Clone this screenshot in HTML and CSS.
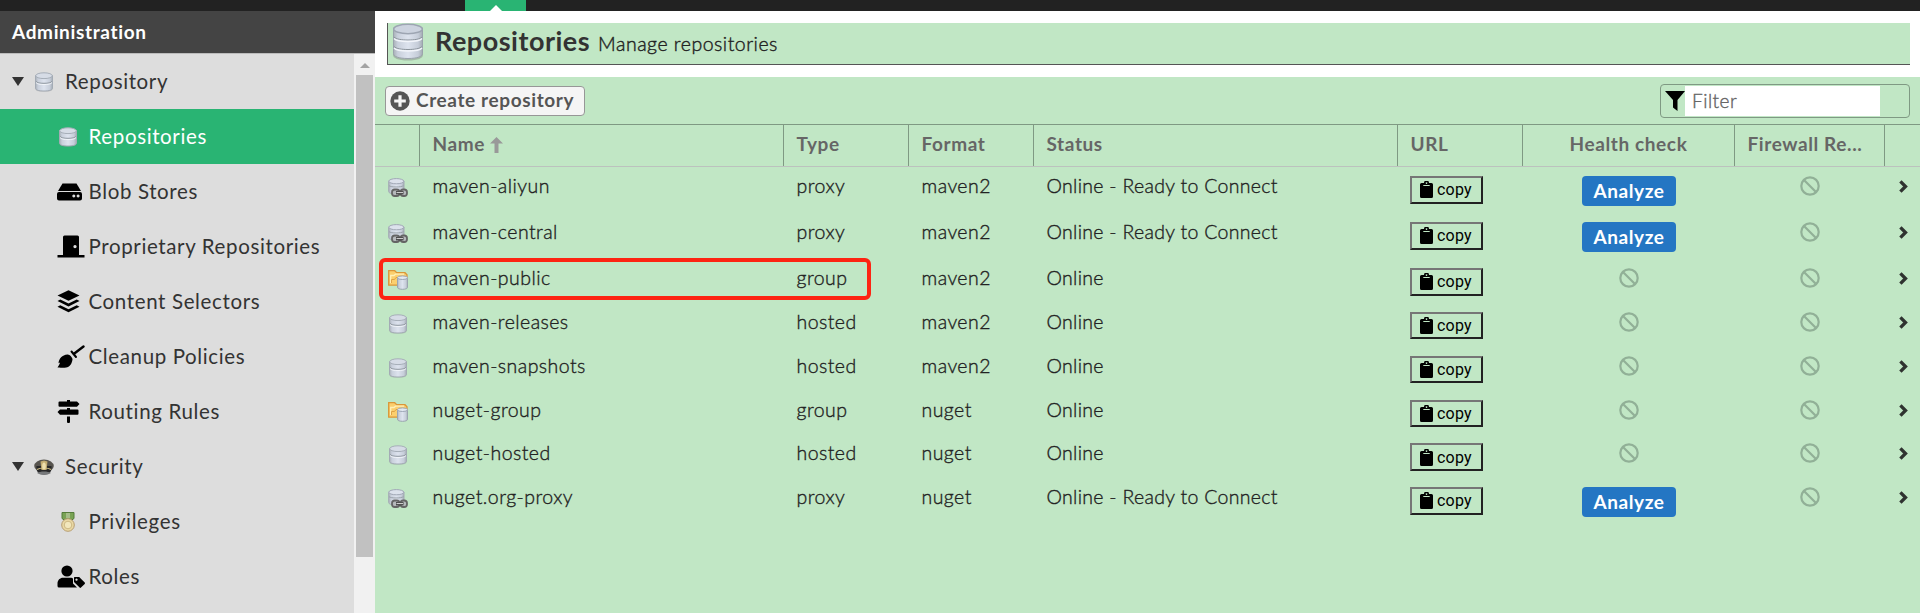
FILE: index.html
```
<!DOCTYPE html>
<html lang="en">
<head>
<meta charset="utf-8">
<title>Repositories</title>
<link rel="stylesheet" href="styles.css">
</head>
<body>
<svg class="defs" width="0" height="0">
  <defs>
    <linearGradient id="steel" x1="0" x2="1" y1="0" y2="0">
      <stop offset="0" stop-color="#a9b0b8"/><stop offset=".15" stop-color="#c9d0dc"/><stop offset=".5" stop-color="#dde3ee"/><stop offset=".85" stop-color="#c6cdd9"/><stop offset="1" stop-color="#a3abb3"/>
    </linearGradient>
    <symbol id="db" viewBox="0 0 20 20">
      <path d="M1.500 4v13c0 1.600 2 2.600 8.500 2.600s8.500-1 8.500-2.600V4z" fill="#777" opacity=".3"/>
      <path d="M1.500 3.500v12.700c0 1.700 3 2.800 8.500 2.800s8.500-1.100 8.500-2.800V3.500z" fill="url(#steel)" stroke="#a3abb5"/>
      <ellipse cx="10" cy="3.700" rx="8.300" ry="2.900" fill="#d6dce6" stroke="#a6aeb8"/>
      <path d="M2 9.300c1 1.600 4 2 8 2s7-.4 8-2" fill="none" stroke="#8f979f"/>
      <path d="M2 10.500c1 1.600 4 2 8 2s7-.4 8-2" fill="none" stroke="#f1f4f9"/>
    </symbol>
    <symbol id="proxy" viewBox="0 0 20 20">
      <path d="M.7 3v10.500C.7 15.200 3.500 16 8.300 16s7.700-1 7.700-2.500V3z" fill="url(#steel)" stroke="#a3abb5"/>
      <ellipse cx="8.300" cy="3.200" rx="7.500" ry="2.600" fill="#dce2ec" stroke="#a0a7b5"/>
      <path d="M1 7.700c2 1.700 12 1.700 14.500 0" fill="none" stroke="#9aa2aa"/>
      <rect x="4" y="11.500" width="7.500" height="6.500" rx="2.800" fill="#b5b8bb" stroke="#646464" stroke-width="1.800"/>
      <rect x="12.500" y="11.500" width="6.500" height="6.500" rx="2.800" fill="#b5b8bb" stroke="#646464" stroke-width="1.800"/>
      <path d="M8 14.700h7.500" stroke="#444" stroke-width="3.400"/><path d="M8.500 14.500h6.500" stroke="#ccc" stroke-width="1.200"/>
    </symbol>
    <symbol id="group" viewBox="0 0 20 20">
      <path d="M.7.7h6l2 2H17l2 2v10.500H.7z" fill="#fbcf6e" stroke="#da9638" stroke-width="1.300"/>
      <path d="M2.700 13V5.500H6l1.500-1.300H16" fill="none" stroke="#fff0b8" stroke-width="1.300"/>
      <path d="M3.500 13V9.500h3l1.500-2h3" fill="none" stroke="#dfa245"/>
      <path d="M9.500 8v9.300c0 1.200 1.800 2 5 2s5-.8 5-2V8z" fill="url(#steel)" stroke="#9ba4b0"/>
      <ellipse cx="14.500" cy="7.700" rx="5" ry="1.800" fill="#e2e8f1" stroke="#9ca5b5"/>
    </symbol>
    <symbol id="ban" viewBox="0 0 20 20"><circle cx="10" cy="10" r="8.700" fill="none" stroke="#91b097" stroke-width="2.200"/><path d="M4 4l12 12" stroke="#91b097" stroke-width="2.200"/></symbol>
    <symbol id="go" viewBox="0 0 9 13"><path d="M1.400 1.400 6.500 6.500l-5.100 5.100" fill="none" stroke="#2f3330" stroke-width="3.300"/></symbol>
    <symbol id="clip" viewBox="0 0 13 17"><path fill-rule="evenodd" d="M1.500 2H4a2.500 2.500 0 0 1 5 0h2.500A1.500 1.500 0 0 1 13 3.500v12a1.500 1.500 0 0 1-1.500 1.500h-10A1.500 1.500 0 0 1 0 15.500v-12A1.500 1.500 0 0 1 1.500 2zm5-.8a.8.8 0 1 0 .01 0zM3.300 4v1.100h6.400V4z"/></symbol>
  </defs>
</svg>
<header class="topbar"><div class="tab"></div></header>
<div class="app">
  <aside class="side">
    <h2 class="side-title">Administration</h2>
    <div class="side-body">
      <nav class="tree">
        <div class="node parent"><i class="caret"></i><svg class="ico20"><use href="#db"/></svg><span>Repository</span></div>
        <div class="node child selected"><span class="slot pic"><svg class="ico20"><use href="#db"/></svg></span><span>Repositories</span></div>
        <div class="node child"><span class="slot"><svg width="25" height="18" viewBox="0 0 25 18"><path d="M5.500.5h14L24 8H1z"/><path fill-rule="evenodd" d="M2 9h21a2 2 0 0 1 2 2v4.500a2 2 0 0 1-2 2H2a2 2 0 0 1-2-2V11a2 2 0 0 1 2-2zm14.800 2.600a1.500 1.500 0 1 0 .01 0zm4.300 0a1.500 1.500 0 1 0 .01 0z"/></svg></span><span>Blob Stores</span></div>
        <div class="node child"><span class="slot"><svg width="28" height="23" viewBox="0 0 28 23"><path fill-rule="evenodd" d="M7.500.5h13A1.500 1.500 0 0 1 22 2v18h5.500v2.500H.5V20H6V2A1.500 1.500 0 0 1 7.500.5zM18 10a1.600 1.600 0 1 0 .01 0z"/></svg></span><span>Proprietary Repositories</span></div>
        <div class="node child"><span class="slot"><svg width="23" height="23" viewBox="0 0 23 23"><path d="M11.500.3 22.500 5.500 11.500 10.800.5 5.500zM3.300 9.500l8.200 3.900 8.200-3.900 2.800 1.500-11 5.400L.5 11zM3.300 15.300l8.200 3.900 8.200-3.900 2.800 1.500-11 5.400L.5 16.800z"/></svg></span><span>Content Selectors</span></div>
        <div class="node child"><span class="slot"><svg width="28" height="23" viewBox="0 0 28 23"><path d="M26.500 1.500 17 8.800" stroke="#000" stroke-width="2.400" stroke-linecap="round"/><path d="M14.500 6.500l4.500 5.500" stroke="#000" stroke-width="2" stroke-linecap="round"/><path d="M10.500 9.500c1.500-.6 5.300 3 5 5-.6 4.500-3 7.500-6.300 8-3 .4-8.700 0-8.700 0 1-1.500 2.300-3.600 2.500-5l-1.500.7C2 13.500 5 10 10.500 9.500z"/></svg></span><span>Cleanup Policies</span></div>
        <div class="node child"><span class="slot"><svg width="23" height="23" viewBox="0 0 23 23"><path d="M10 0h3v1.500h7l2.500 2.500L20 6.700H2.500a1 1 0 0 1-1-1V2.500a1 1 0 0 1 1-1H10zM10 8h3v1.500h7.500a1 1 0 0 1 1 1v3.200a1 1 0 0 1-1 1H3L.5 12 3 9.500h7zM10 16.500h3V22a1 1 0 0 1-1 1h-1a1 1 0 0 1-1-1z"/></svg></span><span>Routing Rules</span></div>
        <div class="node parent"><i class="caret"></i><svg class="ico20" viewBox="0 0 20 20"><ellipse cx="10" cy="9" rx="9.800" ry="6.500" fill="#57544e"/><path d="M2.500 9h15c.5 5-1.500 8.500-7.500 8.500S2 14 2.500 9z" fill="#282829"/><path d="M6.500 4.500l3.500-1 3.500 1-1 8.500h-5z" fill="#c3ad72"/><path d="M3 12.500c3-2 11-2 14 0" fill="none" stroke="#d3c184" stroke-width="1.200"/><ellipse cx="10" cy="9" rx="1.800" ry="3.500" fill="#eee0ae"/><path d="M3 16c3-2 11-2 14 0-4 2.500-10 2.500-14 0z" fill="#77797b"/></svg><span>Security</span></div>
        <div class="node child"><span class="slot pic"><svg class="ico20" viewBox="0 0 20 20"><path d="M4 .5h12v6l-3 2H7l-3-2z" fill="#79a354" stroke="#557c3b"/><path d="M8 1h4v5H8z" fill="#a5bd88"/><circle cx="10" cy="13" r="6.300" fill="#ead9a5" stroke="#b79d72"/><circle cx="10" cy="13" r="3.800" fill="#f2e7bd" stroke="#cdb883"/></svg></span><span>Privileges</span></div>
        <div class="node child"><span class="slot"><svg width="28" height="23" viewBox="0 0 28 23"><circle cx="10" cy="6" r="5.600"/><path d="M6 12.700h8.500l1.500.8v5l4 4H2a1.500 1.500 0 0 1-1.500-1.500v-2.500C.5 15 3 12.700 6 12.700z"/><path fill-rule="evenodd" d="M17.500 12h4.700l5.500 5.500c.4.400.4 1 0 1.400L24 22.600c-.4.400-1 .4-1.400 0L17 17v-4.500zm2 1.500a1.100 1.100 0 1 0 .01 0z"/></svg></span><span>Roles</span></div>
      </nav>
      <div class="scroll"><i class="up"></i><i class="thumb"></i></div>
    </div>
  </aside>
  <main class="main">
    <div class="head">
      <div class="head-in">
        <svg class="bigdb" width="34" height="38" viewBox="0 0 34 38"><path d="M2 6v26c0 3 5 5.500 15 5.500S32 35 32 32V6z" fill="#777" opacity=".4"/><path d="M2.500 5v25.500c0 3 5 5 14.500 5s14.500-2 14.500-5V5z" fill="url(#steel)" stroke="#9aa2ac"/><ellipse cx="17" cy="6" rx="14.300" ry="4.700" fill="#ccd3df" stroke="#9da5b2" stroke-width="1.500"/><path d="M3 14c2 2.300 8 3 14 3s12-.7 14-3M3 23.500c2 2.300 8 3 14 3s12-.7 14-3" fill="none" stroke="#8b939b"/><path d="M3 15.500c2 2.300 8 3 14 3s12-.7 14-3M3 25c2 2.300 8 3 14 3s12-.7 14-3" fill="none" stroke="#f2f5fa" stroke-width="1.300"/></svg>
        <h1 class="title">Repositories</h1><span class="sub">Manage repositories</span>
      </div>
    </div>
    <div class="tools">
      <button class="create"><svg width="20" height="20" viewBox="0 0 20 20"><circle cx="10" cy="10" r="9.700" fill="#555"/><path d="M10 4.200v11.600M4.200 10h11.600" stroke="#f5f5f5" stroke-width="3.200"/></svg><span>Create repository</span></button>
      <div class="filter"><svg width="20" height="20" viewBox="0 0 20 20"><path d="M0 0h20l-7.500 9v11L8 16.500V9z"/></svg><span class="field">Filter</span></div>
    </div>
    <div class="row cols">
      <div></div><div class="th"><span>Name</span><svg width="13" height="16" viewBox="0 0 13 16"><path d="M6.500 0 13 6.500H8.500V16h-4V6.500H0z" fill="#999"/></svg></div><div class="th">Type</div><div class="th">Format</div><div class="th">Status</div><div class="th">URL</div><div class="th mid">Health check</div><div class="th fire">Firewall Re...</div><div class="th"></div>
    </div>
    <div class="rows" id="rows"></div>
    <div class="mark"></div>
  </main>
</div>
<script src="app.js"></script>
</body>
</html>
```
FILE: app.js
```
const repos = [
  ['maven-aliyun', 'proxy', 'maven2'],
  ['maven-central', 'proxy', 'maven2'],
  ['maven-public', 'group', 'maven2'],
  ['maven-releases', 'hosted', 'maven2'],
  ['maven-snapshots', 'hosted', 'maven2'],
  ['nuget-group', 'group', 'nuget'],
  ['nuget-hosted', 'hosted', 'nuget'],
  ['nuget.org-proxy', 'proxy', 'nuget']
];
const icons = { proxy: 'proxy', group: 'group', hosted: 'db' };
const ban = '<svg class="ban"><use href="#ban"/></svg>';
document.getElementById('rows').innerHTML = repos.map(([name, type, format]) => {
  const proxy = type === 'proxy';
  return `<div class="row item ${proxy ? 'tall' : ''}">
    <div class="kind"><svg class="ico20"><use href="#${icons[type]}"/></svg></div>
    <div class="td">${name}</div><div class="td">${type}</div><div class="td">${format}</div>
    <div class="td status">${proxy ? 'Online - Ready to Connect' : 'Online'}</div>
    <div class="url"><button class="copy"><svg width="13" height="17"><use href="#clip"/></svg><span>copy</span></button></div>
    <div class="health">${proxy ? '<button class="analyze">Analyze</button>' : ban}</div>
    <div class="health">${ban}</div>
    <div class="next"><svg width="9" height="13"><use href="#go"/></svg></div>
  </div>`;
}).join('');
```
FILE: styles.css
```
* { box-sizing: border-box; }
body { margin: 0; height: 613px; overflow: hidden; font-family: Lato, "Open Sans", sans-serif; font-size: 19px; color: #333; background: #fff; }
button { font: inherit; margin: 0; padding: 0; }
.defs { position: absolute; }
svg { display: block; flex: none; }
.ico20 { width: 20px; height: 20px; }
.topbar { height: 11px; background: #222; padding-left: 465px; }
.tab { width: 61px; height: 11px; background: #29b473; display: flex; justify-content: center; align-items: flex-end; }
.tab::after { content: ""; border: 6px solid transparent; border-top: 0; border-bottom-color: #fff; }
.app { display: flex; height: 602px; }
.side { width: 375px; flex: none; background: #ddd; }
.side-title { margin: 0; height: 43px; background: #444; border-bottom: 1px solid #bbb; color: #fff; font-size: 19px; line-height: 42px; padding-left: 12px; letter-spacing: .65px; }
.side-body { display: flex; height: 559px; overflow: hidden; }
.tree { width: 354px; }
.node { height: 55px; display: flex; align-items: center; font-size: 20.500px; letter-spacing: .63px; white-space: nowrap; }
.node > span:last-child { padding-bottom: 1px; }
.parent { padding-left: 12px; }
.parent .ico20 { margin: 1px 11px 0 10px; }
.caret { border: 6.500px solid transparent; border-top: 9px solid #333; border-bottom: 0; flex: none; }
.child { padding-left: 57px; }
.slot { width: 31.500px; display: flex; }
.pic { padding-left: 1px; }
.selected { background: #29b473; color: #fff; }
.scroll { width: 21px; background: #f1f1f1; display: flex; flex-direction: column; align-items: center; padding-top: 9px; }
.up { border: 5px solid transparent; border-top: 0; border-bottom-color: #a3a3a3; }
.thumb { width: 17px; height: 482px; margin-top: 7px; background: #c1c1c1; }
.main { position: relative; flex: 1; background: #c1e7c5; }
.head { height: 66px; background: #fff; padding: 12px 10px 12px 12px; }
.head-in { height: 42px; background: #c1e7c5; border-left: 1px solid #555; border-bottom: 1px solid #555; display: flex; align-items: baseline; }
.bigdb { margin-left: 3px; align-self: flex-start; }
.title { margin: 0 0 0 10px; font-size: 27px; line-height: 36px; letter-spacing: .5px; }
.sub { margin-left: 8px; font-size: 19.500px; font-weight: 300; letter-spacing: .5px; color: #222; -webkit-text-stroke: .4px; }
.tools { height: 48px; border-bottom: 1px solid #7f9983; display: flex; justify-content: space-between; align-items: flex-start; padding: 9px 10px 0; }
.create { width: 200px; height: 30px; border: 1px solid #979797; border-radius: 4px; background: #f5f5f5; color: #555; font-weight: 700; letter-spacing: .62px; display: flex; align-items: center; padding-left: 4px; gap: 6px; }
.create span { padding-bottom: 3px; }
.filter { width: 250px; height: 34px; margin-top: -2px; border: 1px solid #7f9983; border-radius: 4px; display: flex; align-items: center; padding-left: 4px; }
.field { background: #fff; width: 195px; height: 30px; line-height: 30px; padding-left: 7px; color: #666; font-weight: 300; letter-spacing: .5px; -webkit-text-stroke: .4px; }
.row { display: grid; grid-template-columns: 44px 364px 125px 125px 364px 125px 212px 150px 36px; }
.cols { height: 42px; border-bottom: 1px solid #bcc2be; color: #666; font-weight: 700; letter-spacing: .6px; line-height: 38px; }
.th { border-left: 1px solid #7f9983; padding: 0 0 3px 12.500px; display: flex; align-items: center; gap: 5px; white-space: nowrap; }
.th svg { margin-top: 2px; }
.mid { justify-content: center; padding-left: 0; }
.item { height: 43.850px; line-height: 24px; }
.tall { height: 46px; }
.kind { padding: 11px 0 0 13px; }
.td { padding: 7px 0 0 13.500px; font-weight: 300; font-size: 19.500px; letter-spacing: .45px; color: #222; -webkit-text-stroke: .35px; white-space: nowrap; }
.status { letter-spacing: .3px; }
.url { padding: 9px 0 0 13px; }
.copy { width: 73px; height: 27.500px; border: 2px solid #222; border-top-color: #767676; border-left-color: #767676; background: none; display: flex; align-items: center; padding-left: 8px; gap: 4px; font: 16px Roboto, sans-serif; letter-spacing: .2px; color: #000; }
.health { display: flex; justify-content: center; padding: 9px 0 0 2px; }
.analyze { width: 94px; height: 30px; border: 0; border-radius: 4px; background: #2476c3; color: #fff; font-weight: 700; letter-spacing: .6px; line-height: 28px; }
.ban { width: 20px; height: 20px; }
.next { padding: 13px 0 0 14.500px; }
.mark { position: absolute; left: 4px; top: 247px; width: 492px; height: 42px; border: 4px solid #fd2413; border-radius: 6px; }
```
